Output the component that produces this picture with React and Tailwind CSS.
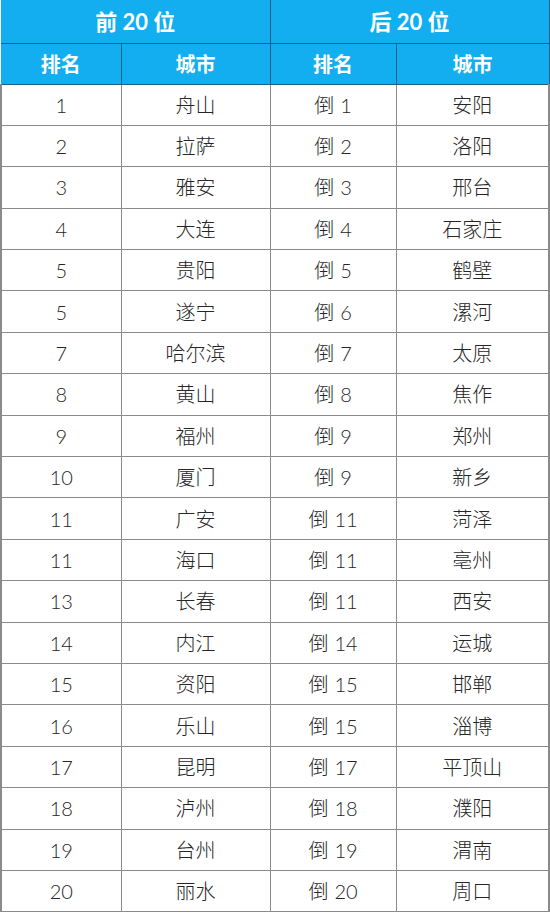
import React from "react";

const top = [
  ["1", "舟山"], ["2", "拉萨"], ["3", "雅安"], ["4", "大连"], ["5", "贵阳"],
  ["5", "遂宁"], ["7", "哈尔滨"], ["8", "黄山"], ["9", "福州"], ["10", "厦门"],
  ["11", "广安"], ["11", "海口"], ["13", "长春"], ["14", "内江"], ["15", "资阳"],
  ["16", "乐山"], ["17", "昆明"], ["18", "泸州"], ["19", "台州"], ["20", "丽水"],
];

const bottom = [
  ["1", "安阳"], ["2", "洛阳"], ["3", "邢台"], ["4", "石家庄"], ["5", "鹤壁"],
  ["6", "漯河"], ["7", "太原"], ["8", "焦作"], ["9", "郑州"], ["9", "新乡"],
  ["11", "菏泽"], ["11", "亳州"], ["11", "西安"], ["14", "运城"], ["15", "邯郸"],
  ["15", "淄博"], ["17", "平顶山"], ["18", "濮阳"], ["19", "渭南"], ["20", "周口"],
];

const font = { fontFamily: '"Lato", "Noto Sans CJK SC", sans-serif' };

export default function App() {
  return (
    <div className="w-[550px] h-[914px] bg-white overflow-hidden" style={font}>
      <table className="border-collapse table-fixed w-[548px]">
        <colgroup>
          <col className="w-[120px]" />
          <col className="w-[149px]" />
          <col className="w-[126px]" />
          <col className="w-[153px]" />
        </colgroup>
        <thead className="bg-[#12aeef] text-white font-bold">
          <tr className="h-[43px] text-[22px]">
            <th colSpan={2} className="border-r border-b border-[#1d5f86] font-bold">
              前 20 位
            </th>
            <th colSpan={2} className="border-r border-b border-[#1d5f86] font-bold">
              后 20 位
            </th>
          </tr>
          <tr className="h-[41px] text-[20px]">
            <th className="border-r border-b border-[#1d5f86] font-bold">排名</th>
            <th className="border-r border-b border-[#1d5f86] font-bold">城市</th>
            <th className="border-r border-b border-[#1d5f86] font-bold">排名</th>
            <th className="border-r border-b border-[#1d5f86] font-bold">城市</th>
          </tr>
        </thead>
        <tbody className="text-[20px] text-[#262626] font-light">
          {top.map((t, i) => (
            <tr key={i} className="h-[41.4px]">
              <td className="text-center border border-[#8a8a8a] border-l-2">{t[0]}</td>
              <td className="text-center border border-[#8a8a8a]">{t[1]}</td>
              <td className="text-center border border-[#8a8a8a]">
                倒<span className="ml-[6px]">{bottom[i][0]}</span>
              </td>
              <td className="text-center border border-[#8a8a8a] border-r-2">{bottom[i][1]}</td>
            </tr>
          ))}
        </tbody>
      </table>
    </div>
  );
}
